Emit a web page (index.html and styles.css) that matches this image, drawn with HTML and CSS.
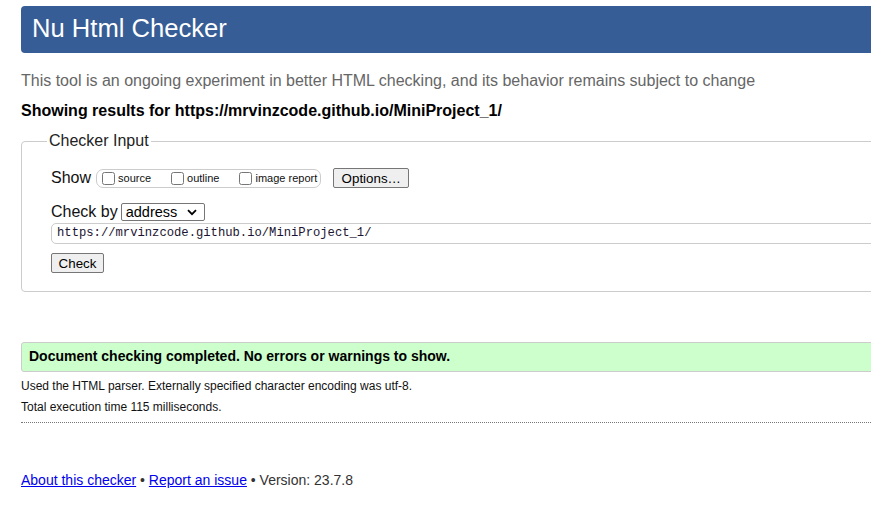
FILE: index.html
```html
<!DOCTYPE html>
<html lang="en">
<head>
<meta charset="utf-8">
<title>Showing results for https://mrvinzcode.github.io/MiniProject_1/ - Nu Html Checker</title>
<link rel="stylesheet" href="styles.css">
</head>
<body>
<div class="page">
  <h1 class="title">Nu Html Checker</h1>
  <p class="tagline">This tool is an ongoing experiment in better HTML checking, and its behavior remains subject to change</p>
  <p class="showing">Showing results for https://mrvinzcode.github.io/MiniProject_1/</p>

  <form class="checker">
    <fieldset class="checker-input">
      <legend class="legend">Checker Input</legend>
      <div class="row show-row">
        <span class="row-label">Show</span>
        <span class="show-box">
          <label class="opt"><input type="checkbox" class="cb"><span>source</span></label>
          <label class="opt"><input type="checkbox" class="cb"><span>outline</span></label>
          <label class="opt"><input type="checkbox" class="cb"><span>image report</span></label>
        </span>
        <button type="button" class="btn btn-options">Options…</button>
      </div>
      <div class="row by-row">
        <span class="row-label">Check by</span>
        <span class="select">address<svg class="chev" width="10" height="7" viewBox="0 0 10 7"><path d="M1 1.2 L5 5.2 L9 1.2" fill="none" stroke="#000" stroke-width="1.8"/></svg></span>
      </div>
      <div class="url">https://mrvinzcode.github.io/MiniProject_1/</div>
      <button type="button" class="btn btn-check">Check</button>
    </fieldset>
  </form>

  <p class="success">Document checking completed. No errors or warnings to show.</p>
  <p class="details">Used the HTML parser. Externally specified character encoding was utf-8.</p>
  <p class="details">Total execution time 115 milliseconds.</p>
  <hr class="dotted">

  <p class="footer"><a href="#">About this checker</a> • <a href="#">Report an issue</a> • Version: 23.7.8</p>
</div>
</body>
</html>
```

FILE: styles.css
```css
html, body {
  margin: 0;
  padding: 0;
  overflow: hidden;
  background: #fff;
}
body {
  font-family: "Liberation Sans", Arial, sans-serif;
  color: #000;
}
.page {
  width: 1000px;
  padding: 6px 0 0 21px;
}
.title {
  margin: 0;
  background: #365D95;
  color: #fff;
  font-weight: normal;
  font-size: 25.6px;
  line-height: 29px;
  padding: 8px 11px 10px;
  border-radius: 4px;
}
.tagline {
  margin: 19px 0 0;
  font-size: 16px;
  line-height: 18px;
  color: #666;
}
.showing {
  margin: 12px 0 0;
  font-size: 16px;
  line-height: 18px;
  font-weight: bold;
}
.checker {
  margin: 12px 0 0;
}
.checker-input {
  margin: 0;
  border: 1px solid #ccc;
  border-radius: 4px;
  padding: 18px 0 18px 29px;
  min-width: 0;
}
.legend {
  margin-left: -4px;
  padding: 0 2px;
  font-size: 16px;
  line-height: 18px;
  color: #222;
}
.row {
  display: flex;
  align-items: center;
}
.row-label {
  font-size: 16px;
  line-height: 18px;
  color: #111;
}
.show-row {
  height: 20px;
}
.show-box {
  display: flex;
  align-items: center;
  gap: 20px;
  margin-left: 5px;
  height: 17px;
  border: 1px solid #ccc;
  border-radius: 7px;
  padding: 0 3px 0 5px;
}
.opt {
  display: flex;
  align-items: center;
  gap: 3px;
  font-size: 11px;
  line-height: 13px;
  color: #111;
}
.cb {
  margin: 0;
  width: 13px;
  height: 13px;
}
.btn {
  font-family: "Liberation Sans", Arial, sans-serif;
  font-size: 13.33px;
  color: #000;
  background: #efefef;
  border: 1px solid #767676;
  border-radius: 2px;
  padding: 0;
  height: 20px;
  box-sizing: border-box;
}
.btn-options {
  margin-left: 12px;
  width: 76px;
}
.by-row {
  margin-top: 15px;
  height: 18px;
}
.select {
  box-sizing: border-box;
  display: flex;
  align-items: center;
  justify-content: space-between;
  margin-left: 3px;
  width: 84px;
  height: 18px;
  border: 1px solid #767676;
  border-radius: 2px;
  padding: 0 7px 0 4px;
  font-size: 14.5px;
  color: #000;
}
.chev {
  display: block;
}
.url {
  box-sizing: border-box;
  margin-top: 2px;
  height: 21px;
  border: 1px solid #ccc;
  border-radius: 5px;
  padding: 0 0 0 5px;
  font-family: "Liberation Mono", "DejaVu Sans Mono", monospace;
  font-size: 12.2px;
  line-height: 19px;
  color: #1a1430;
}
.btn-check {
  display: block;
  margin-top: 9px;
  width: 53px;
}
.success {
  margin: 50px 0 0;
  border: 1px solid #ccc;
  border-radius: 3px;
  background: #ccffcc;
  padding: 5px 8px 7px 7px;
  font-size: 14px;
  line-height: 16px;
  font-weight: bold;
}
.details {
  margin: 4px 0 0;
  font-size: 12px;
  line-height: 21px;
  color: #111;
}
.details + .details {
  margin-top: 0;
}
.dotted {
  margin: 4px 0 0;
  border: 0;
  border-top: 1px dotted #777;
  height: 0;
}
.footer {
  margin: 49px 0 0;
  font-size: 14px;
  line-height: 16px;
  color: #333;
}
.footer a {
  color: #0000ee;
}
```
